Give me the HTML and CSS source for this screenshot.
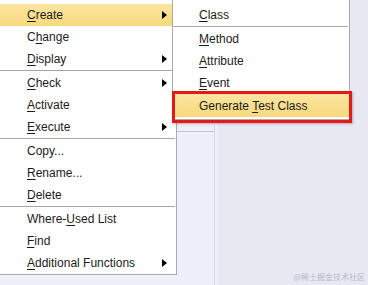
FILE: index.html
```html
<!DOCTYPE html>
<html lang="en">
<head>
  <meta charset="UTF-8" />
  <title>Context Menu</title>
  <link rel="stylesheet" href="styles.css">
</head>
<body>

<div class="desk">
  <div class="pane">
    <div class="pane-box"></div>
  </div>
  <div class="work"></div>

  <!-- main context menu -->
  <ul class="menu main-menu">
    <li class="item active"><span><u>C</u>reate</span><i class="arrow"></i></li>
    <li class="item"><span>C<u>h</u>ange</span></li>
    <li class="item"><span><u>D</u>isplay</span><i class="arrow"></i></li>
    <li class="sep"></li>
    <li class="item"><span><u>C</u>heck</span><i class="arrow"></i></li>
    <li class="item"><span><u>A</u>ctivate</span></li>
    <li class="item"><span><u>E</u>xecute</span><i class="arrow"></i></li>
    <li class="sep"></li>
    <li class="item"><span>Copy...</span></li>
    <li class="item"><span><u>R</u>ename...</span></li>
    <li class="item"><span><u>D</u>elete</span></li>
    <li class="sep"></li>
    <li class="item"><span>Where-<u>U</u>sed List</span></li>
    <li class="item"><span><u>F</u>ind</span></li>
    <li class="item"><span><u>A</u>dditional Functions</span><i class="arrow"></i></li>
  </ul>

  <!-- Create submenu -->
  <ul class="menu sub-menu">
    <li class="item"><span><u>C</u>lass</span></li>
    <li class="sep"></li>
    <li class="item"><span><u>M</u>ethod</span></li>
    <li class="item"><span><u>A</u>ttribute</span></li>
    <li class="item"><span><u>E</u>vent</span></li>
    <li class="item active"><span>Generate <u>T</u>est Class</span></li>
  </ul>

  <!-- red annotation frame drawn over the screenshot -->
  <div class="mark"></div>

  <div class="watermark">@稀土掘金技术社区</div>
</div>

</body>
</html>
```

FILE: styles.css
```css
body {
  margin: 0;
  font-family: 'Liberation Sans', Arial, sans-serif;
  font-size: 12px;
  color: #1b1b1b;
  background-color: #e8e8f2;
  overflow: hidden;
}

.desk {
  position: relative;
  width: 368px;
  height: 285px;
  display: flex;
}

.pane {
  width: 214px;
  background-color: #efeefb;
  border-right: 1px solid #d6d6e4;
  box-shadow: 2px 0 0 #f1f1f8;
}

.pane-box {
  margin: 123px 0 0 176px;
  height: 8px;
  border-bottom: 1px solid #c4c4d2;
}

.work {
  flex: 1;
}

.menu {
  list-style: none;
  margin: 0;
  padding: 0;
  background-color: #fff;
  position: absolute;
  display: flex;
  flex-direction: column;
}

.main-menu {
  left: -2px;
  top: -2px;
  width: 177px;
  padding-top: 5px;
  border: 1px solid #a9a9b8;
}

.sub-menu {
  left: 172px;
  top: -2px;
  width: 176px;
  padding: 5px 0 2px;
  border: 1px solid #a9a9b8;
}

.item {
  height: 22px;
  display: flex;
  align-items: center;
  justify-content: space-between;
  padding: 0 9px 0 28px;
}

.sub-menu .item {
  padding-left: 26px;
}

.item u {
  text-decoration-thickness: 1px;
  text-underline-offset: 2px;
}

.item.active {
  background: linear-gradient(#fbe5a2, #f7d97c);
}

.sub-menu .item.active {
  height: 23px;
}

.arrow {
  width: 0;
  height: 0;
  border-top: 4px solid transparent;
  border-bottom: 4px solid transparent;
  border-left: 5px solid #000;
}

.sep {
  height: 1px;
  margin: 0 1px 1px;
  background-color: #a7a7ae;
}

.sub-menu .sep {
  margin: 0 1px 1px 0;
}

.mark {
  position: absolute;
  left: 172px;
  top: 91px;
  width: 174px;
  height: 26px;
  border: 3px solid #e41a1a;
  box-shadow: 1px 1px 2px rgba(90, 60, 60, 0.35);
}

.watermark {
  position: absolute;
  right: 3px;
  bottom: 3px;
  font-family: 'Noto Sans CJK SC', sans-serif;
  font-size: 8px;
  color: #b9b9c6;
}
```
